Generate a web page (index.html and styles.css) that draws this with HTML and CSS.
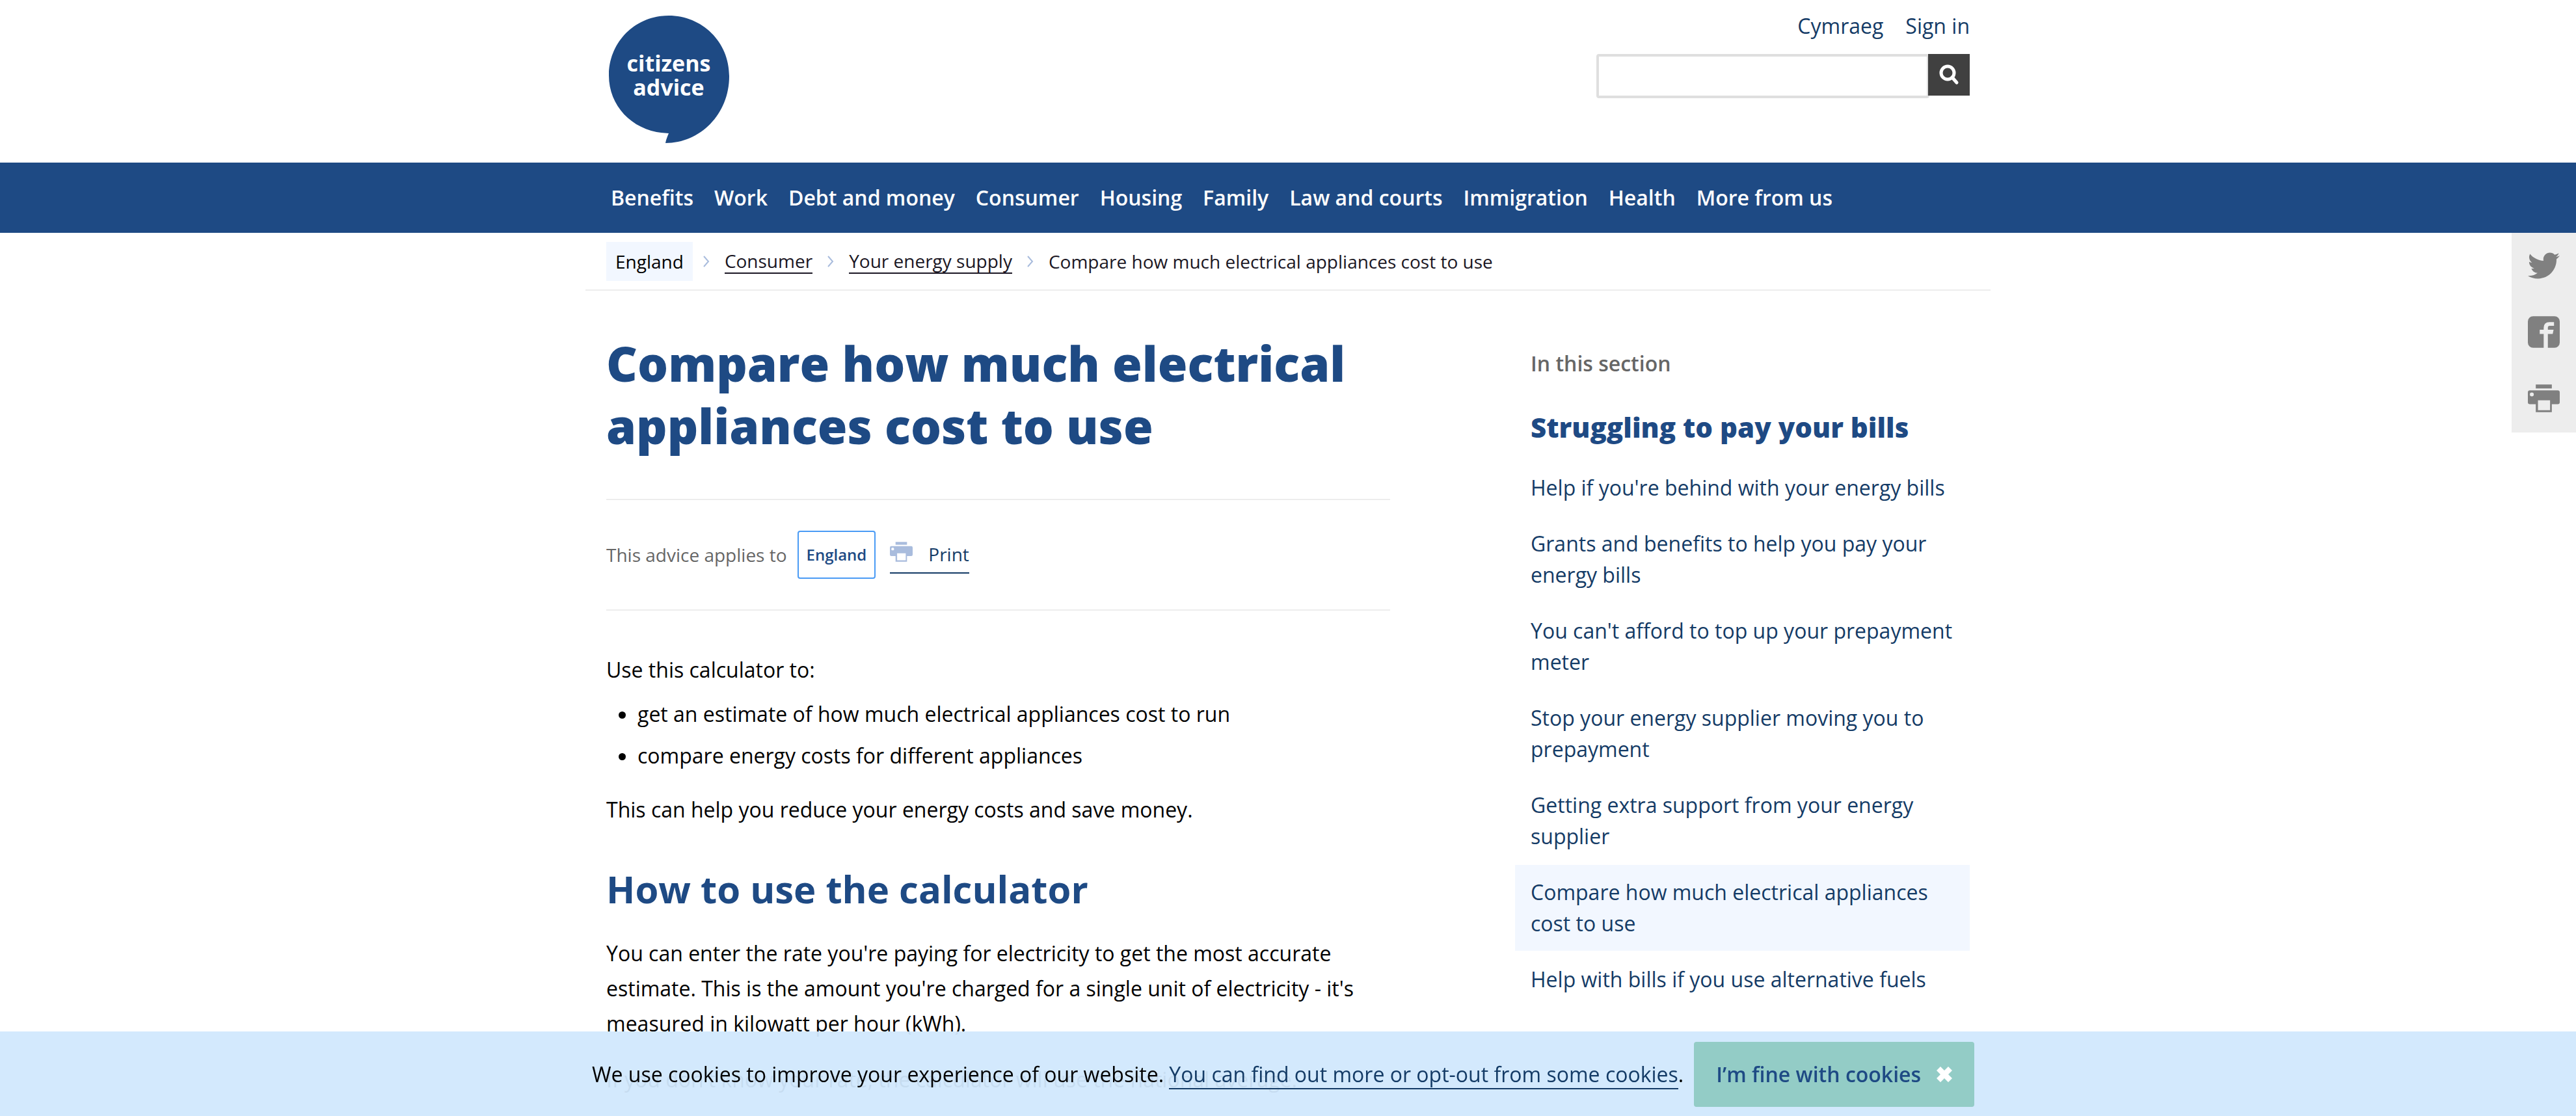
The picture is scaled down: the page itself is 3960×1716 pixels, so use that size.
FILE: index.html
```html
<!DOCTYPE html>
<html lang="en">
<head>
<meta charset="utf-8">
<meta name="viewport" content="width=device-width, initial-scale=1">
<title>Compare how much electrical appliances cost to use - Citizens Advice</title>
<link rel="stylesheet" href="styles.css">
</head>
<body>
<svg class="symbols" aria-hidden="true">
  <symbol id="icon-printer" viewBox="0 0 145 126">
    <path d="M36 0h73v18H36z"/>
    <path fill-rule="evenodd" d="M9 27h127a9 9 0 0 1 9 9v45a9 9 0 0 1-9 9h-27v36H36V90H9a9 9 0 0 1-9-9V36a9 9 0 0 1 9-9zM46 72v45h55V72zM18 36a9 9 0 1 0 0 18 9 9 0 0 0 0-18z"/>
  </symbol>
  <symbol id="icon-chevron" viewBox="0 0 10 18">
    <path d="M1 1l7 8-7 8" fill="none" stroke="currentColor" stroke-width="2"/>
  </symbol>
</svg>

<header class="header">
  <div class="wrap header-inner">
    <a class="logo" href="#" aria-label="Citizens Advice home">
      <svg viewBox="0 0 185 196" role="img" aria-label="Citizens Advice">
        <path d="M92 0C143 0 185 40 185 93C185 152 140 196 87 196C88 190 90 186 92 181C40 180 0 142 0 92C0 40 41 0 92 0z" fill="#1e4a84"/>
        <text class="logo-text" x="92" y="86">citizens</text>
        <text class="logo-text" x="92" y="123">advice</text>
      </svg>
    </a>
    <div class="tools">
      <nav class="account" aria-label="Account">
        <a href="#">Cymraeg</a>
        <a href="#">Sign in</a>
      </nav>
      <form class="search" role="search">
        <input class="search-input" type="text" aria-label="Search">
        <button class="search-button" type="button" aria-label="Search">
          <svg class="search-icon" viewBox="0 0 32 32"><circle cx="14" cy="13" r="10" fill="none" stroke="#fff" stroke-width="5"/><path d="M21 20l7 8" stroke="#fff" stroke-width="5" stroke-linecap="round"/></svg>
        </button>
      </form>
    </div>
  </div>
</header>

<nav class="nav" aria-label="Main">
  <ul class="wrap nav-list">
    <li><a href="#">Benefits</a></li>
    <li><a href="#">Work</a></li>
    <li><a href="#">Debt and money</a></li>
    <li><a href="#">Consumer</a></li>
    <li><a href="#">Housing</a></li>
    <li><a href="#">Family</a></li>
    <li><a href="#">Law and courts</a></li>
    <li><a href="#">Immigration</a></li>
    <li><a href="#">Health</a></li>
    <li><a href="#">More from us</a></li>
  </ul>
</nav>

<nav class="wrap crumbs" aria-label="Breadcrumb">
  <span class="crumb-country">England</span>
  <svg class="chevron"><use href="#icon-chevron"/></svg>
  <a class="crumb-link" href="#">Consumer</a>
  <svg class="chevron"><use href="#icon-chevron"/></svg>
  <a class="crumb-link" href="#">Your energy supply</a>
  <svg class="chevron"><use href="#icon-chevron"/></svg>
  <span>Compare how much electrical appliances cost to use</span>
</nav>

<div class="wrap content">
  <main>
    <h1>Compare how much electrical appliances cost to use</h1>
    <div class="applies">
      <span>This advice applies to</span>
      <span class="badge">England</span>
      <a class="print" href="#"><svg class="print-icon"><use href="#icon-printer"/></svg>Print</a>
    </div>
    <p>Use this calculator to:</p>
    <ul class="bullets">
      <li>get an estimate of how much electrical appliances cost to run</li>
      <li>compare energy costs for different appliances</li>
    </ul>
    <p>This can help you reduce your energy costs and save money.</p>
    <h2>How to use the calculator</h2>
    <p>You can enter the rate you're paying for electricity to get the most accurate estimate. This is the amount you're charged for a single unit of electricity - it's measured in kilowatt per hour (kWh).</p>
    <p>If you don't know your rate, the calculator will use the national average.</p>
  </main>
  <aside class="section-nav">
    <h2 class="section-label">In this section</h2>
    <h3 class="section-title">Struggling to pay your bills</h3>
    <ul class="section-list">
      <li><a href="#">Help if you're behind with your energy bills</a></li>
      <li><a href="#">Grants and benefits to help you pay your energy bills</a></li>
      <li><a href="#">You can't afford to top up your prepayment meter</a></li>
      <li><a href="#">Stop your energy supplier moving you to prepayment</a></li>
      <li><a href="#">Getting extra support from your energy supplier</a></li>
      <li><a class="current" href="#" aria-current="page">Compare how much electrical appliances cost to use</a></li>
      <li><a href="#">Help with bills if you use alternative fuels</a></li>
    </ul>
  </aside>
</div>

<div class="share">
  <a href="#" aria-label="Share on Twitter">
    <svg viewBox="0 0 24 24"><path d="M23.954 4.569c-.885.389-1.83.654-2.825.775 1.014-.611 1.794-1.574 2.163-2.723-.951.555-2.005.959-3.127 1.184-.896-.959-2.173-1.559-3.591-1.559-2.717 0-4.92 2.203-4.92 4.917 0 .39.045.765.127 1.124C7.691 8.094 4.066 6.13 1.64 3.161c-.427.722-.666 1.561-.666 2.475 0 1.71.87 3.213 2.188 4.096-.807-.026-1.566-.248-2.228-.616v.061c0 2.385 1.693 4.374 3.946 4.827-.413.111-.849.171-1.296.171-.314 0-.615-.03-.916-.086.631 1.953 2.445 3.377 4.604 3.417-1.68 1.319-3.809 2.105-6.102 2.105-.39 0-.779-.023-1.17-.067 2.189 1.394 4.768 2.209 7.557 2.209 9.054 0 13.999-7.496 13.999-13.986 0-.209 0-.42-.015-.63.961-.689 1.8-1.56 2.46-2.548z"/></svg>
  </a>
  <a href="#" aria-label="Share on Facebook">
    <svg viewBox="0 0 145 144"><path d="M24 0h97a24 24 0 0 1 24 24v96a24 24 0 0 1-24 24H91V81h22l4-19H91V52q0-8 8-8h20V27H99Q72 27 72 53v9H54v19h18v63H24a24 24 0 0 1-24-24V24A24 24 0 0 1 24 0z"/></svg>
  </a>
  <a href="#" aria-label="Print this page">
    <svg><use href="#icon-printer"/></svg>
  </a>
</div>

<div class="cookies">
  <div class="cookies-inner">
    <p>We use cookies to improve your experience of our website. <a href="#">You can find out more or opt-out from some cookies</a>.</p>
    <button class="cookies-button" type="button">I’m fine with cookies
      <svg class="cross" viewBox="0 0 24 24"><path d="M6 0l6 6 6-6 6 6-6 6 6 6-6 6-6-6-6 6-6-6 6-6-6-6z"/></svg>
    </button>
  </div>
</div>
</body>
</html>
```

FILE: styles.css
```css
* {
  box-sizing: border-box;
}

body {
  margin: 0;
  background: #fff;
  color: #000;
  font-family: "Open Sans", "Noto Sans", sans-serif;
  font-size: 32px;
  line-height: 54px;
}

h1, h2, h3, p, ul {
  margin: 0;
}

ul {
  padding: 0;
}

a {
  color: #143b66;
  text-decoration: none;
}

svg {
  display: block;
}

button {
  border: 0;
  font: inherit;
  cursor: pointer;
}

.symbols {
  position: absolute;
  width: 0;
  height: 0;
}

.wrap {
  max-width: 2160px;
  margin: 0 auto;
  padding: 0 32px;
}

/* Header */
.header-inner {
  display: flex;
  justify-content: space-between;
  padding-bottom: 30px;
}

.logo {
  width: 185px;
  margin: 24px 0 0 4px;
}

.logo-text {
  fill: #fff;
  font-size: 34px;
  font-weight: 700;
  text-anchor: middle;
}

.tools {
  display: flex;
  flex-direction: column;
  gap: 19px;
  width: 574px;
  padding-top: 16px;
}

.account {
  display: flex;
  justify-content: flex-end;
  gap: 34px;
  line-height: 48px;
}

.search {
  display: flex;
  align-items: flex-start;
}

.search-input {
  flex: 1;
  min-width: 0;
  height: 68px;
  margin-right: -2px;
  padding: 0 16px;
  border: 4px solid #dfdfdf;
  border-radius: 4px;
  font: inherit;
}

.search-button {
  position: relative;
  display: grid;
  place-items: center;
  width: 64px;
  height: 64px;
  padding: 0;
  background: #404040;
}

.search-icon {
  width: 32px;
  height: 32px;
}

/* Main navigation */
.nav {
  background: #1e4a84;
}

.nav-list {
  display: flex;
  gap: 32px;
  padding: 27px 39px;
  list-style: none;
  font-weight: 600;
}

.nav-list a {
  color: #fff;
}

/* Breadcrumb */
.crumbs {
  display: flex;
  align-items: center;
  gap: 23px;
  padding-top: 14px;
  padding-bottom: 13px;
  border-bottom: 2px solid #ededed;
  color: #1b1724;
  font-size: 28px;
  line-height: 36px;
}

.crumb-country {
  margin-right: -7px;
  padding: 12px 14px;
  background: #f2f7ff;
  color: #000;
}

.crumb-link {
  border-bottom: 2px solid #1b1724;
  color: #1b1724;
}

.chevron {
  width: 10px;
  height: 18px;
  color: #a9bcdd;
}

/* Page content */
.content {
  display: grid;
  grid-template-columns: minmax(0, 1205fr) minmax(0, 699fr);
  gap: 192px;
}

main {
  padding-top: 64px;
}

h1 {
  color: #1e4a84;
  font-size: 74px;
  font-weight: 800;
  line-height: 96px;
}

.applies {
  display: flex;
  align-items: center;
  margin: 64px 0;
  padding: 47px 0;
  border-top: 2px solid #ededed;
  border-bottom: 2px solid #ededed;
  color: #666;
  font-size: 28px;
  line-height: 36px;
}

.badge {
  margin: 0 22px 0 16px;
  padding: 17px 12px;
  border: 2px solid #4a9bf5;
  border-radius: 4px;
  color: #1e4a84;
  font-size: 24px;
  font-weight: 600;
}

.print {
  display: flex;
  align-items: center;
  gap: 24px;
  padding: 8px 0;
  border-bottom: 2px solid #143b66;
}

.print-icon {
  width: 35px;
  height: 31px;
  margin-bottom: 8px;
  fill: #a9bcdd;
}

.bullets {
  display: flex;
  flex-direction: column;
  gap: 10px;
  margin: 14px 0 29px;
  padding-left: 48px;
}

main h2 {
  margin: 57px 0 34px;
  color: #1e4a84;
  font-size: 58px;
  font-weight: 700;
  line-height: 76px;
}

main p + p {
  margin-top: 32px;
}

/* Section links */
.section-nav {
  padding-top: 88px;
  line-height: 48px;
}

.section-label {
  padding-left: 24px;
  color: #666;
  font-size: 32px;
  font-weight: 600;
}

.section-title {
  margin: 50px 0 27px;
  padding-left: 24px;
  color: #1e4a84;
  font-size: 42px;
  font-weight: 800;
}

.section-list {
  display: flex;
  flex-direction: column;
  gap: 2px;
  list-style: none;
}

.section-list a {
  display: block;
  padding: 18px 24px;
}

.section-list .current {
  background: #f2f7ff;
}

/* Share links, pinned to the window edge */
.share {
  position: absolute;
  top: 358px;
  right: 0;
  display: flex;
  flex-direction: column;
  padding-bottom: 1px;
  background: #ededed;
}

.share a {
  display: grid;
  place-items: center;
  width: 99px;
  height: 102px;
  padding-bottom: 2px;
}

.share svg {
  width: 49px;
  height: 49px;
  fill: #808080;
}

/* Cookie notice */
.cookies {
  position: fixed;
  right: 0;
  bottom: 0;
  left: 0;
  background: rgba(209, 232, 253, 0.95);
}

.cookies-inner {
  display: flex;
  align-items: center;
  gap: 16px;
  max-width: 2160px;
  margin: 0 auto;
  padding: 16px 10px 14px;
}

.cookies a {
  border-bottom: 2px solid #143b66;
}

.cookies-button {
  display: flex;
  align-items: center;
  gap: 24px;
  height: 100px;
  padding: 0 34px;
  border-radius: 4px;
  background: #93ccc6;
  color: #1e4a84;
  font-weight: 600;
}

.cross {
  width: 24px;
  height: 24px;
  fill: #fff;
}
```
